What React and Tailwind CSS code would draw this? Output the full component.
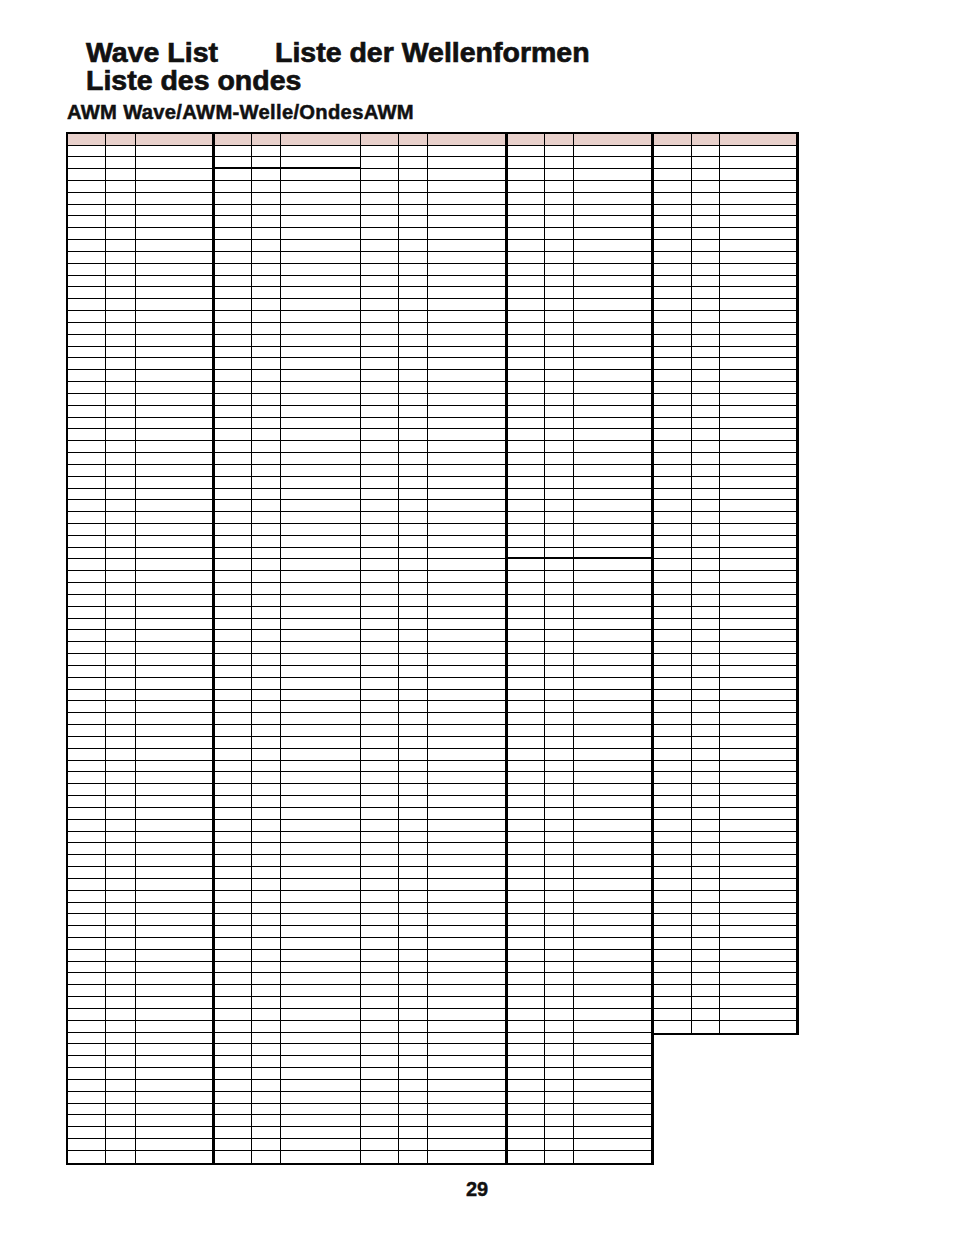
const groups = [
  {
    cells: ['w-[40px] border-l-2', 'w-[30px]', 'w-[79px] border-r-[3px]'],
    rows: 86,
    thickAfter: null,
  },
  {
    cells: ['w-[37px]', 'w-[29px]', 'w-[80px]'],
    rows: 86,
    thickAfter: 2,
  },
  {
    cells: ['w-[38px]', 'w-[29px]', 'w-[80px] border-r-[3px]'],
    rows: 86,
    thickAfter: null,
  },
  {
    cells: ['w-[37px]', 'w-[29px]', 'w-[80px] border-r-[3px]'],
    rows: 86,
    thickAfter: 35,
  },
  {
    cells: ['w-[38px]', 'w-[28px]', 'w-[79px] border-r-[3px]'],
    rows: 75,
    thickAfter: null,
  },
];

const Row = ({ cells, className }) => (
  <div className={`flex ${className}`}>
    {cells.map((c, i) => (
      <div key={i} className={`${c} h-full border-r border-black`} />
    ))}
  </div>
);

const Group = ({ cells, rows, thickAfter }) => (
  <div className="flex flex-col border-t-2 border-b-2 border-black">
    <Row cells={cells} className="h-[11.5px] bg-[#e8d0cb] border-b border-black" />
    {Array.from({ length: rows }).map((_, i) => {
      const last = i === rows - 1;
      let cls = 'h-[11.84px] border-b border-black';
      if (last) cls = 'h-[11.84px]';
      else if (thickAfter === i + 1) cls = 'h-[11.84px] border-b-2 border-black';
      return <Row key={i} cells={cells} className={cls} />;
    })}
  </div>
);

export default function App() {
  return (
    <div className="w-[954px] h-[1235px] bg-white text-[#111] font-['Liberation_Sans',Arial,sans-serif]">
      <div className="pt-[38px] pl-[86px] font-bold text-[28.5px] leading-[28px] [-webkit-text-stroke:0.7px_#111]">
        <div className="flex">
          <span>Wave List</span>
          <span className="ml-[57px]">Liste der Wellenformen</span>
        </div>
        <div>Liste des ondes</div>
      </div>
      <div className="mt-[7.5px] pl-[67px] font-bold text-[20.2px] leading-[20px] tracking-[0.015em] [-webkit-text-stroke:0.5px_#111]">
        AWM Wave/AWM-Welle/OndesAWM
      </div>
      <div className="mt-[10.5px] ml-[66px] flex items-start">
        {groups.map((g, i) => (
          <Group key={i} {...g} />
        ))}
      </div>
      <div className="mt-[14.5px] text-center font-bold text-[20px] leading-[20px] [-webkit-text-stroke:0.4px_#111]">29</div>
    </div>
  );
}
